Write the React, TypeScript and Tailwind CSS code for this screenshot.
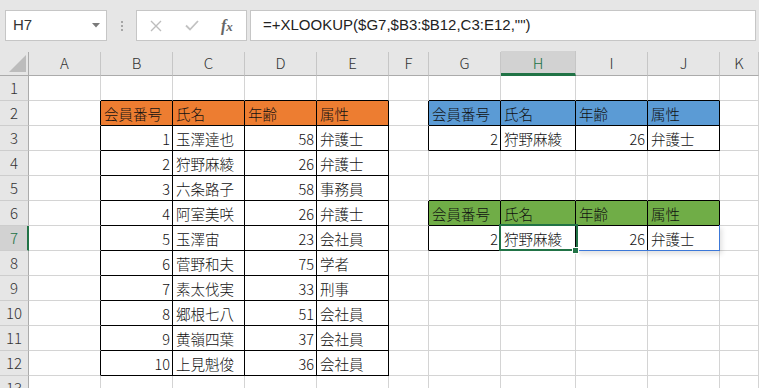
import React from 'react';

const COLS = ['A', 'B', 'C', 'D', 'E', 'F', 'G', 'H', 'I', 'J', 'K'];
const ROWS = Array.from({ length: 13 }, (_, i) => i + 1);

const HEAD = ['会員番号', '氏名', '年齢', '属性'];
const MEMBERS: [number, string, number, string][] = [
  [1, '玉澤達也', 58, '弁護士'],
  [2, '狩野麻綾', 26, '弁護士'],
  [3, '六条路子', 58, '事務員'],
  [4, '阿室美咲', 26, '弁護士'],
  [5, '玉澤宙', 23, '会社員'],
  [6, '菅野和夫', 75, '学者'],
  [7, '素太伐実', 33, '刑事'],
  [8, '郷根七八', 51, '会社員'],
  [9, '黄嶺四葉', 37, '会社員'],
  [10, '上見魁俊', 36, '会社員'],
];

type Cell = { v: string; num?: boolean; fill?: string };
const cells: Record<string, Cell> = {};

const putRow = (startCol: number, row: number, vals: (string | number)[], fill?: string) => {
  vals.forEach((v, i) => {
    cells[`${COLS[startCol + i]}${row}`] = { v: String(v), num: typeof v === 'number', fill };
  });
};

putRow(1, 2, HEAD, 'bg-[#ed7d31]');
MEMBERS.forEach((m, i) => putRow(1, 3 + i, m));
putRow(6, 2, HEAD, 'bg-[#5b9bd5]');
putRow(6, 3, MEMBERS[1]);
putRow(6, 6, HEAD, 'bg-[#70ad47]');
putRow(6, 7, MEMBERS[1]);

// bordered ranges: [c1, c2, r1, r2]
const TABLES = [
  [1, 4, 2, 12],
  [6, 9, 2, 3],
  [6, 9, 6, 7],
];
const inTable = (c: number, r: number) =>
  TABLES.some(([c1, c2, r1, r2]) => c >= c1 && c <= c2 && r >= r1 && r <= r2);

const CJK = "font-['Noto_Sans_CJK_JP','Noto_Sans',sans-serif]";

export default function App() {
  return (
    <div className={`relative h-[388px] w-[759px] overflow-hidden bg-white ${CJK}`}>
      {/* Formula bar */}
      <div className="flex h-[50px] items-start bg-[#e6e6e6] pt-[10px]">
        <div className="ml-[5px] flex h-[31px] w-[102px] items-center justify-between border border-[#c6c6c6] bg-white pl-[7px] pr-[6px]">
          <span className="font-['Liberation_Sans',sans-serif] text-[15px] text-[#333]">H7</span>
          <svg width="8" height="5" viewBox="0 0 8 5">
            <path d="M0 0 L8 0 L4 4.5 Z" fill="#7a7a7a" />
          </svg>
        </div>
        <div className="ml-[13px] flex h-[31px] w-[3px] flex-col items-center justify-center gap-[2px]">
          <div className="h-[2px] w-[2px] bg-[#a6a6a6]" />
          <div className="h-[2px] w-[2px] bg-[#a6a6a6]" />
          <div className="h-[2px] w-[2px] bg-[#a6a6a6]" />
        </div>
        <div className="ml-[13px] flex h-[31px] w-[111px] items-center border border-[#c6c6c6] bg-white">
          <svg width="12" height="12" viewBox="0 0 12 12" className="ml-[13px]">
            <path d="M1 1 L11 11 M11 1 L1 11" stroke="#bdbdbd" strokeWidth="1.4" fill="none" />
          </svg>
          <svg width="14" height="11" viewBox="0 0 14 11" className="ml-[23px]">
            <path d="M1 5.5 L5 9.5 L13 1" stroke="#c2c2c2" strokeWidth="1.8" fill="none" />
          </svg>
          <span className="ml-[22px] font-['Liberation_Serif',serif] text-[16px] font-bold italic leading-none text-[#666]">
            f<span className="text-[13px]">x</span>
          </span>
        </div>
        <div className="ml-[3px] mr-[3px] flex h-[31px] flex-1 items-center border border-[#c6c6c6] bg-white pl-[12px]">
          <span className="font-['Liberation_Sans',sans-serif] text-[15px] text-[#222]">
            =+XLOOKUP($G7,$B3:$B12,C3:E12,"")
          </span>
        </div>
      </div>

      {/* Sheet */}
      <div className="relative">
        <div className="grid grid-cols-[29px_72px_72px_72px_72px_72px_40px_72px_75px_72px_72px_1fr] grid-rows-[26px_repeat(13,25px)] bg-[#e6e6e6]">
          {/* corner */}
          <div className="mt-[2px] h-[24px] border-b border-r border-[#ababab]">
            <svg width="28" height="23" viewBox="0 0 28 23">
              <path d="M26 3 L26 20 L9 20 Z" fill="#bcbcbc" />
            </svg>
          </div>
          {COLS.map((c) =>
            c === 'H' ? (
              <div
                key={c}
                className="mt-[1px] flex h-[25px] items-center justify-center border-b-[3px] border-r border-b-[#217346] border-r-[#c6c6c6] bg-[#d2d2d2] pt-[2px] text-[15px] font-light text-[#217346]"
              >
                {c}
              </div>
            ) : (
              <div
                key={c}
                className="mt-[2px] flex h-[24px] items-center justify-center border-b border-r border-b-[#ababab] border-r-[#c6c6c6] text-[15px] font-light text-[#333]"
              >
                {c}
              </div>
            )
          )}

          {ROWS.map((r) => (
            <React.Fragment key={r}>
              {r === 7 ? (
                <div className="flex items-center justify-center border-b border-r-2 border-b-[#cdcdcd] border-r-[#217346] bg-[#d2d2d2] pl-[1px] text-[15px] font-light text-[#217346]">
                  {r}
                </div>
              ) : (
                <div className="flex items-center justify-center border-b border-r border-b-[#cdcdcd] border-r-[#ababab] text-[15px] font-light text-[#333]">
                  {r}
                </div>
              )}
              {COLS.map((c, ci) => {
                const cell = cells[`${c}${r}`];
                const rBlack = inTable(ci, r) || inTable(ci + 1, r);
                const bBlack = inTable(ci, r) || inTable(ci, r + 1);
                return (
                  <div
                    key={c}
                    className={`flex items-center overflow-hidden whitespace-nowrap border-b border-r pt-[2px] text-[14.5px] font-light leading-none text-[#111] ${
                      rBlack ? 'border-r-black' : 'border-r-[#d4d4d4]'
                    } ${bBlack ? 'border-b-black' : 'border-b-[#d4d4d4]'} ${cell?.fill ?? 'bg-white'} ${
                      cell?.num ? 'justify-end pr-[2px]' : 'justify-start pl-[3px]'
                    }`}
                  >
                    {cell?.v}
                  </div>
                );
              })}
            </React.Fragment>
          ))}
        </div>

        {/* formula result range outline */}
        <div className="pointer-events-none absolute left-[576px] top-[175px] h-[26px] w-[144px] border-b border-r border-[#3c78d8] shadow-[2px_3px_5px_rgba(0,0,0,0.12)]" />
        {/* active cell H7 */}
        <div className="pointer-events-none absolute left-[499px] top-[174px] h-[27px] w-[79px] border-2 border-[#217346]" />
        <div className="pointer-events-none absolute left-[572px] top-[197px] h-[7px] w-[7px] border border-white bg-[#217346]" />
      </div>
    </div>
  );
}
